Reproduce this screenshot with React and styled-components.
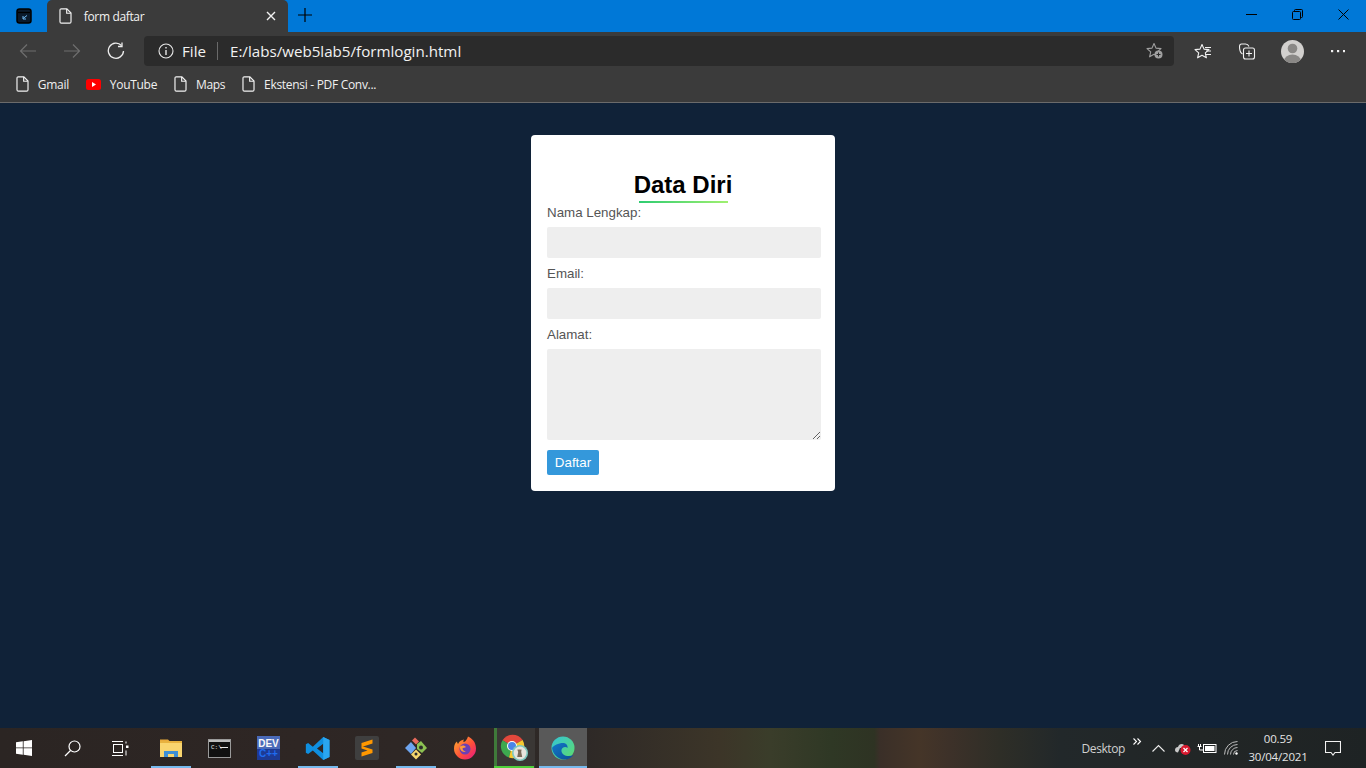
import React from 'react'
import styled, { createGlobalStyle } from 'styled-components'

const Global = createGlobalStyle`
  html, body { margin: 0; padding: 0; height: 100%; overflow: hidden; }
  body { font-family: "Liberation Sans", Arial, sans-serif; background: #102238; }
  * { box-sizing: border-box; }
`

const Screen = styled.div`
  width: 1366px;
  height: 768px;
  display: flex;
  flex-direction: column;
  overflow: hidden;
`

/* browser chrome */
const TitleBar = styled.div`
  height: 32px;
  background: #0078d7;
  display: flex;
  align-items: flex-end;
`

const TabActions = styled.div`
  width: 47px;
  height: 32px;
  display: flex;
  align-items: center;
  justify-content: center;
`

const Tab = styled.div`
  width: 241px;
  height: 32px;
  background: #3b3b3b;
  border-radius: 5px 5px 0 0;
  display: flex;
  align-items: center;
  padding: 0 12px;
  gap: 12px;
  color: #f2f2f2;
  font-family: "Open Sans", sans-serif;
  font-size: 12px;
  letter-spacing: -0.35px;
`

const TabTitle = styled.span`
  flex: 1;
`

const NewTab = styled.div`
  width: 34px;
  height: 32px;
  padding-bottom: 2px;
  display: flex;
  align-items: center;
  justify-content: center;
`

const WindowButtons = styled.div`
  margin-left: auto;
  display: flex;
`

const WindowButton = styled.div`
  width: 46px;
  height: 32px;
  padding-bottom: 4px;
  display: flex;
  align-items: center;
  justify-content: center;
`

const Toolbar = styled.div`
  height: 38px;
  background: #3b3b3b;
  display: flex;
  align-items: center;
  padding: 0 6px;
`

const NavButton = styled.div`
  width: 44px;
  height: 32px;
  display: flex;
  align-items: center;
  justify-content: center;
`

const AddressBar = styled.div`
  width: 1030px;
  height: 30px;
  margin: 0 6px 0 6px;
  background: #2b2b2b;
  border-radius: 4px;
  display: flex;
  align-items: center;
  padding: 0 10px 0 14px;
  color: #f2f2f2;
  font-family: "Open Sans", sans-serif;
  font-size: 15.15px;
`

const SiteLabel = styled.span`
  margin-left: 8px;
  padding-right: 11px;
  border-right: 1px solid #6a6a6a;
  line-height: 18px;
`

const Url = styled.span`
  margin-left: 12px;
  flex: 1;
`

const ToolIcons = styled.div`
  display: flex;
  align-items: center;
`

const ToolIcon = styled.div`
  width: 45px;
  height: 32px;
  display: flex;
  align-items: center;
  justify-content: center;
`

const Bookmarks = styled.div`
  height: 33px;
  background: #3b3b3b;
  border-bottom: 1px solid #6b6b6b;
  display: flex;
  align-items: center;
  padding: 0 0 4px 16px;
`

const Bookmark = styled.div`
  display: flex;
  align-items: center;
  gap: 9px;
  margin-right: 17px;
  color: #f0f0f0;
  font-family: "Open Sans", sans-serif;
  font-size: 12px;
  letter-spacing: -0.3px;
`

/* page */
const Page = styled.main`
  flex: 1;
  background: #102238;
  display: flex;
  justify-content: center;
  align-items: flex-start;
  padding-top: 32px;
`

const Card = styled.form`
  width: 304px;
  height: 356px;
  background: #fff;
  border-radius: 4px;
  padding: 36px 14px 0 16px;
`

const Heading = styled.h2`
  position: relative;
  margin: 0;
  height: 33px;
  padding-right: 2px;
  line-height: 28px;
  font-size: 24px;
  font-weight: 700;
  color: #000;
  text-align: center;
  &::after {
    content: '';
    position: absolute;
    left: 92px;
    top: 30px;
    width: 89px;
    height: 2px;
    background: linear-gradient(to right, #2ecc71, #a0f070);
  }
`

const Label = styled.label`
  display: block;
  height: 16px;
  line-height: 18px;
  margin-top: ${p => p.$first ? '0' : '7px'};
  margin-bottom: 7px;
  font-size: 13.33px;
  color: #555;
`

const Field = styled.input`
  display: block;
  width: 274px;
  height: 31px;
  border: 0;
  border-radius: 2px;
  background: #eee;
  padding: 0 8px;
`

const Area = styled.textarea`
  display: block;
  width: 274px;
  height: 91px;
  border: 0;
  border-radius: 2px;
  background: #eee;
  padding: 8px;
`

const Submit = styled.button`
  display: block;
  width: 52px;
  height: 25px;
  margin-top: 10px;
  padding: 0 0 1px;
  border: 0;
  border-radius: 2px;
  background: #3498db;
  color: #fff;
  font-family: "Liberation Sans", Arial, sans-serif;
  font-size: 13.33px;
`

/* windows taskbar */
const Taskbar = styled.footer`
  height: 40px;
  display: flex;
  align-items: stretch;
  color: #ddd;
  background: linear-gradient(to right,
    #2b2523 0%, #2e2624 22%, #2e2927 43%, #3c3528 52.7%, #3a3d2a 56.4%, #2f3825 60.8%,
    #2e3323 64%, #3a2f28 64.4%, #453528 67.3%, #3d3129 69.5%, #2e2e27 73.2%, #22282a 77.6%,
    #222626 88%, #1e2324 100%);
`

const StartSlot = styled.div`
  width: 48px;
  display: flex;
  align-items: center;
  justify-content: center;
`

const TaskList = styled.div`
  margin-left: 2px;
  display: flex;
`

const TaskItem = styled.div`
  position: relative;
  width: 49px;
  display: flex;
  align-items: center;
  justify-content: center;
  background: ${p => p.$active ? 'linear-gradient(#595959, #595959) 1px 0 / 48px 100% no-repeat' : 'none'};
  &::after {
    content: '';
    display: ${p => p.$mark ? 'block' : 'none'};
    position: absolute;
    left: ${p => p.$active ? '1px' : '5px'};
    bottom: 0;
    width: ${p => p.$active ? '48px' : '40px'};
    height: 2px;
    background: ${p => p.$mark};
  }
`

const ChromeGlow = styled.div`
  position: absolute;
  left: 5px;
  top: 0;
  bottom: 0;
  width: 41px;
  border-left: 3px solid #3f7a3a;
  background: #3a3735;
`

const TaskIcon = styled.div`
  position: relative;
  line-height: 0;
`

const Tray = styled.div`
  margin-left: auto;
  display: flex;
  align-items: center;
`

const DesktopLabel = styled.span`
  font-family: "Open Sans", sans-serif;
  font-size: 12px;
  letter-spacing: -0.4px;
  color: #d0d0d0;
  margin-right: 8px;
`

const More = styled.div`
  width: 13px;
  height: 40px;
  padding-top: 3px;
  color: #fff;
`

const TrayIcon = styled.div`
  width: 24.5px;
  height: 40px;
  display: flex;
  align-items: center;
  justify-content: center;
`

const Clock = styled.div`
  width: 68px;
  font-family: "Open Sans", sans-serif;
  font-size: 11.5px;
  line-height: 18px;
  text-align: center;
  color: #e4e4e4;
  letter-spacing: -0.2px;
`

const Notify = styled.div`
  width: 54px;
  padding-right: 12px;
  display: flex;
  align-items: center;
  justify-content: center;
  height: 40px;
`

function DocIcon({ size = 16 }) {
  return (
    <svg width={size * 0.8} height={size} viewBox="0 0 13 16" fill="none" stroke="#f2f2f2" strokeWidth="1.2">
      <path d="M1 2.2C1 1.3 1.5.7 2.4.7H8l4.2 4.3v8.8c0 .9-.6 1.5-1.4 1.5H2.4c-.9 0-1.4-.6-1.4-1.5z" />
      <path d="M7.8.9v4.3h4.2" />
    </svg>
  )
}

function Star({ stroke = '#f2f2f2' }) {
  return <path d="M8 1.5l2 4.6 5 .5-3.7 3.3 1.1 4.9L8 12.2l-4.4 2.6 1.1-4.9L1 6.6l5-.5z" fill="none" stroke={stroke} strokeWidth="1.1" strokeLinejoin="round" />
}

function FileExplorerIcon() {
  return (
    <svg width="22" height="20" viewBox="0 0 22 20">
      <path d="M0 1.5h8l2 2h-10z" fill="#e8a93a" />
      <rect x="0" y="3" width="22" height="16" fill="#f9d56f" />
      <rect x="0" y="3" width="22" height="2" fill="#e8b23f" />
      <path d="M4 19v-6h14v6h-4v-3h-6v3z" fill="#3f8fd6" />
    </svg>
  )
}

function CmdIcon() {
  return (
    <svg width="23" height="19" viewBox="0 0 23 19">
      <rect x=".5" y=".5" width="22" height="18" fill="#111" stroke="#9a9a9a" />
      <rect x="1" y="1" width="21" height="2" fill="#bdbdbd" />
      <text x="3" y="9.5" fontSize="6" fill="#e8e8e8" fontFamily="Liberation Mono, monospace">C:\</text>
      <rect x="12" y="8" width="8" height="1" fill="#e8e8e8" />
    </svg>
  )
}

function DevCppIcon() {
  return (
    <svg width="23" height="24" viewBox="0 0 23 24">
      <rect width="23" height="24" fill="#1d3a94" />
      <rect width="23" height="13" fill="#4a6ab8" />
      <text x="11.5" y="10.5" fontSize="10" fontWeight="700" textAnchor="middle" fill="#f8f8f8" fontFamily="Liberation Sans, sans-serif">DEV</text>
      <text x="11.5" y="21" fontSize="10" fontWeight="700" textAnchor="middle" fill="#1f6cf0" fontFamily="Liberation Sans, sans-serif">C++</text>
    </svg>
  )
}

function VsCodeIcon() {
  return (
    <svg width="25" height="25" viewBox="0 0 24 24">
      <path d="M17.5 1L23.5 3.8V20.2L17.5 23 7.5 13.8 3 17.2.8 16V8L3 6.8l4.5 3.4zM17.5 7.5L11.5 12l6 4.5z" fill="#0f8fe0" />
      <path d="M17.5 1L23.5 3.8V20.2L17.5 23z" fill="#2aa6f0" />
    </svg>
  )
}

function SublimeIcon() {
  return (
    <svg width="24" height="24" viewBox="0 0 24 24">
      <rect width="24" height="24" rx="2" fill="#3f3f3f" />
      <path d="M17.5 4.5v4L6.5 12V8zM6.5 11l11 3.5v-.1V18l-11 3.500v-4l6-2-6-2z" fill="#ff9800" transform="translate(0 -1)" />
    </svg>
  )
}

function GitExtIcon() {
  return (
    <svg width="24" height="24" viewBox="0 0 24 24">
      <path d="M1 12l6-6 5 6-5 6z" fill="#6ea5ef" />
      <path d="M8 4.500l3-3 4 4-3 3z" fill="#e86a5c" />
      <path d="M13 8l4-3 6 7-5 5-5-4z" fill="#8cc152" />
      <circle cx="17" cy="11.500" r="2" fill="#2c2c2c" />
      <path d="M7 18.500l5-5 5 5-5 5z" fill="#f5d76e" />
      <circle cx="12" cy="18" r="1.500" fill="#2c2c2c" />
    </svg>
  )
}

function FirefoxIcon() {
  return (
    <svg width="24" height="24" viewBox="0 0 24 24">
      <defs>
        <linearGradient id="ffx" x1="0" y1="0" x2="1" y2="1">
          <stop offset="0" stopColor="#ffb52e" />
          <stop offset=".55" stopColor="#ff4f3a" />
          <stop offset="1" stopColor="#e31587" />
        </linearGradient>
      </defs>
      <path d="M12 23.500A11 11 0 0 1 1 12.500C1 9 2.500 6.500 4 5.500c0 1 .4 1.800 1 2.400C6.300 5.200 9 3.800 11 3.500c-.6 1-.8 1.800-.5 2.600 2.500-.4 3.500-3 4.500-5.600 4 2 8 5.500 8 12a11 11 0 0 1-11 11z" fill="url(#ffx)" />
      <circle cx="12" cy="13" r="5.500" fill="#6b3fb5" />
      <path d="M7 10.500c2-1.800 5-1.200 6 .5-1 .7-3 .8-3.500 1.500 0 1.500 1.500 3 3.500 3-2.500 1.400-6.500-.5-6-5z" fill="#ff9a3a" />
    </svg>
  )
}

function ChromeIcon() {
  return (
    <svg width="30" height="30" viewBox="0 0 30 30">
      <g transform="translate(1 1)">
        <path d="M12 12L2.500 6.200A12 12 0 0 1 22.600 6z" fill="#e2483c" />
        <path d="M12 12L2.500 6.200A12 12 0 0 0 9 23.600z" fill="#3da84f" />
        <path d="M12 12L22.600 6A12 12 0 0 1 9 23.600z" fill="#f7c930" />
        <circle cx="12" cy="12" r="5" fill="#fff" />
        <circle cx="12" cy="12" r="4" fill="#4b85e8" />
      </g>
      <circle cx="21" cy="20" r="8" fill="#7fc9c0" />
      <circle cx="21" cy="20" r="6.400" fill="#e8e4dc" />
      <path d="M18.500 17c0-1 .8-1 1-.3.5-.2 1.500-.2 2 0 .2-.7 1-.7 1 .3l-.3 2 1 5h-5l1-5z" fill="#7a6a58" />
    </svg>
  )
}

function EdgeIcon() {
  return (
    <svg width="24" height="24" viewBox="0 0 24 24">
      <defs>
        <linearGradient id="edgeA" x1="0" y1="0" x2="1" y2="1">
          <stop offset="0" stopColor="#33c4d8" />
          <stop offset="1" stopColor="#5fdc6a" />
        </linearGradient>
        <linearGradient id="edgeB" x1="0" y1="0" x2="1" y2="1">
          <stop offset="0" stopColor="#1277c8" />
          <stop offset="1" stopColor="#0c4f94" />
        </linearGradient>
      </defs>
      <circle cx="12" cy="12" r="11.500" fill="url(#edgeA)" />
      <path d="M1 11.500C1.500 17.500 6.500 23.500 13.500 23.500c4 0 7-1.800 9-4.500-3 1.500-7.500 1.500-10-.5-2.500-2-2.500-5-1-6.500 1.500-1.500 4-1.500 5 0 .5-2.800-1.500-5-4.500-5-4.500 0-9.500 2.500-10.500 4.500z" fill="url(#edgeB)" />
    </svg>
  )
}

const tasks = [
  { icon: <FileExplorerIcon />, mark: '#76b9ed' },
  { icon: <CmdIcon /> },
  { icon: <DevCppIcon /> },
  { icon: <VsCodeIcon />, mark: '#76b9ed' },
  { icon: <SublimeIcon /> },
  { icon: <GitExtIcon />, mark: '#76b9ed' },
  { icon: <FirefoxIcon /> },
  { icon: <ChromeIcon />, mark: '#4fd03a', glow: true },
  { icon: <EdgeIcon />, mark: '#76b9ed', active: true },
]

const bookmarks = ['Gmail', 'YouTube', 'Maps', 'Ekstensi - PDF Conv...']

export default function App() {
  return (
    <Screen>
      <Global />
      <TitleBar>
        <TabActions>
          <svg width="16" height="16" viewBox="0 0 16 16">
            <rect x="1" y="1" width="14" height="14" rx="2.500" fill="#0a1a2c" stroke="#000" strokeWidth="1.500" />
            <path d="M2 4.500h12" stroke="#000" strokeWidth="1.300" />
            <path d="M11 7.500L7 10.500M7 8v3h3" stroke="#6fb8f0" strokeWidth="1" fill="none" />
          </svg>
        </TabActions>
        <Tab>
          <DocIcon />
          <TabTitle>form daftar</TabTitle>
          <svg width="10" height="10" viewBox="0 0 10 10" stroke="#f2f2f2" strokeWidth="1.400">
            <path d="M1 1l8 8M9 1l-8 8" />
          </svg>
        </Tab>
        <NewTab>
          <svg width="16" height="16" viewBox="0 0 16 16" stroke="#000" strokeWidth="1.200">
            <path d="M8 1v14M1 8h14" />
          </svg>
        </NewTab>
        <WindowButtons>
          <WindowButton>
            <svg width="11" height="11" viewBox="0 0 11 11" stroke="#000"><path d="M0 5.500h11" /></svg>
          </WindowButton>
          <WindowButton>
            <svg width="11" height="11" viewBox="0 0 11 11" fill="none" stroke="#000">
              <rect x=".5" y="2.500" width="8" height="8" rx="1" />
              <path d="M2.500 2.500V1.500a1 1 0 0 1 1-1h6a1 1 0 0 1 1 1v6a1 1 0 0 1-1 1h-1" />
            </svg>
          </WindowButton>
          <WindowButton>
            <svg width="11" height="11" viewBox="0 0 11 11" stroke="#000"><path d="M.5.5l10 10M10.500.5l-10 10" /></svg>
          </WindowButton>
        </WindowButtons>
      </TitleBar>

      <Toolbar>
        <NavButton>
          <svg width="18" height="16" viewBox="0 0 18 16" fill="none" stroke="#6e6e6e" strokeWidth="1.200">
            <path d="M17 8H1.500M8 1.500L1.500 8 8 14.500" />
          </svg>
        </NavButton>
        <NavButton>
          <svg width="18" height="16" viewBox="0 0 18 16" fill="none" stroke="#6e6e6e" strokeWidth="1.200">
            <path d="M1 8h15.500M10 1.500L16.500 8 10 14.500" />
          </svg>
        </NavButton>
        <NavButton>
          <svg width="18" height="18" viewBox="0 0 18 18" fill="none" stroke="#ededed" strokeWidth="1.300">
            <path d="M14.500 3.500A7.600 7.600 0 1 0 16.500 9" />
            <path d="M15 .5v4h-4" />
          </svg>
        </NavButton>
        <AddressBar>
          <svg width="16" height="16" viewBox="0 0 16 16" fill="none" stroke="#e8e8e8" strokeWidth="1.100">
            <circle cx="8" cy="8" r="7" />
            <path d="M8 7v5M8 4v1.500" strokeWidth="1.400" />
          </svg>
          <SiteLabel>File</SiteLabel>
          <Url>E:/labs/web5lab5/formlogin.html</Url>
          <svg width="18" height="18" viewBox="0 0 18 18">
            <Star stroke="#a0a0a0" />
            <circle cx="12.500" cy="12.500" r="4" fill="#a0a0a0" />
            <path d="M12.500 10.500v4M10.500 12.500h4" stroke="#2b2b2b" strokeWidth="1" />
          </svg>
        </AddressBar>
        <ToolIcons>
          <ToolIcon>
            <svg width="18" height="16" viewBox="0 0 18 16">
              <Star />
              <path d="M11 4.500h6M12 8h5M11.500 11.500h5.500" stroke="#f2f2f2" strokeWidth="1.100" />
            </svg>
          </ToolIcon>
          <ToolIcon>
            <svg width="18" height="18" viewBox="1 0 18 18" fill="none" stroke="#f2f2f2" strokeWidth="1.100">
              <path d="M4.500 12C2.500 11 1.500 9 1.500 4.500c0-1.500.8-2.500 2-2.500h4c1.500 0 2.800.8 3.500 2.500" />
              <rect x="5.500" y="6" width="11" height="11" rx="2" />
              <path d="M11 8.500v6M8 11.500h6" />
            </svg>
          </ToolIcon>
          <ToolIcon>
            <svg width="23" height="23" viewBox="0 0 23 23">
              <defs>
                <clipPath id="avatar"><circle cx="11.500" cy="11.500" r="11.500" /></clipPath>
              </defs>
              <g clipPath="url(#avatar)">
                <rect width="23" height="23" fill="#d2d0ce" />
                <circle cx="11.500" cy="8.500" r="4.800" fill="#8a8886" />
                <ellipse cx="11.500" cy="21" rx="8.500" ry="6.500" fill="#8a8886" />
              </g>
            </svg>
          </ToolIcon>
          <ToolIcon>
            <svg width="14" height="4" viewBox="0 0 14 4" fill="#f2f2f2">
              <rect y="1" width="2.200" height="2.200" />
              <rect x="6" y="1" width="2.200" height="2.200" />
              <rect x="12" y="1" width="2.200" height="2.200" />
            </svg>
          </ToolIcon>
        </ToolIcons>
      </Toolbar>

      <Bookmarks>
        {bookmarks.map(name => (
          <Bookmark key={name}>
            {name === 'YouTube' ? (
              <svg width="15" height="11" viewBox="0 0 15 11">
                <rect width="15" height="11" rx="2.500" fill="#f00" />
                <path d="M6 3l4 2.500L6 8z" fill="#fff" />
              </svg>
            ) : <DocIcon />}
            {name}
          </Bookmark>
        ))}
      </Bookmarks>

      <Page>
        <Card>
          <Heading>Data Diri</Heading>
          <Label $first>Nama Lengkap:</Label>
          <Field type="text" />
          <Label>Email:</Label>
          <Field type="text" />
          <Label>Alamat:</Label>
          <Area />
          <Submit type="button">Daftar</Submit>
        </Card>
      </Page>

      <Taskbar>
        <StartSlot>
          <svg width="16" height="16" viewBox="0 0 16 16" fill="#fff">
            <path d="M0 2.300L6.800 1.300V7.500H0zM7.600 1.200L16 0V7.500H7.600zM0 8.300H6.800V14.700L0 13.700zM7.600 8.300H16V16L7.600 14.800z" />
          </svg>
        </StartSlot>
        <StartSlot>
          <svg width="17" height="17" viewBox="0 0 17 17" fill="none" stroke="#fff" strokeWidth="1.200">
            <circle cx="10.500" cy="6.500" r="5.500" />
            <path d="M6.500 10.500L1 16" />
          </svg>
        </StartSlot>
        <StartSlot>
          <svg width="17" height="15" viewBox="0 0 17 15" fill="none" stroke="#fff" strokeWidth="1">
            <rect x="1.500" y="3.500" width="9" height="8" />
            <path d="M0 .5h11M0 14.500h11M14 .5v2" />
            <rect x="14" y="4.500" width="2.500" height="2.500" fill="#fff" stroke="none" />
            <path d="M14 9.500v5" />
          </svg>
        </StartSlot>
        <TaskList>
          {tasks.map((task, i) => (
            <TaskItem key={i} $mark={task.mark} $active={task.active}>
              {task.glow && <ChromeGlow />}
              <TaskIcon>{task.icon}</TaskIcon>
            </TaskItem>
          ))}
        </TaskList>
        <Tray>
          <DesktopLabel>Desktop</DesktopLabel>
          <More>
            <svg width="9" height="7" viewBox="0 0 9 7" fill="none" stroke="#fff" strokeWidth="1.100">
              <path d="M.5.5L3.500 3.500.5 6.500M4.500.5L7.500 3.500 4.500 6.500" />
            </svg>
          </More>
          <TrayIcon>
            <svg width="13" height="8" viewBox="0 0 13 8" fill="none" stroke="#eee" strokeWidth="1.100"><path d="M.5 7.500L6.500 1.500 12.500 7.500" /></svg>
          </TrayIcon>
          <TrayIcon>
            <svg width="17" height="14" viewBox="0 0 17 14">
              <path d="M1 9c0-2 1.500-3 3-3 .5-2 2-3 3.500-3C10 3 11 5 11 7H6L4 11.500C2 11.500 1 10.500 1 9z" fill="#c8c8c8" />
              <circle cx="11.500" cy="9" r="5" fill="#d8182e" />
              <path d="M9.500 7l4 4M13.500 7l-4 4" stroke="#fff" strokeWidth="1.200" />
            </svg>
          </TrayIcon>
          <TrayIcon>
            <svg width="20" height="12" viewBox="0 0 20 12" fill="none" stroke="#fff" strokeWidth="1">
              <rect x="6.500" y="2.500" width="12.500" height="8" />
              <rect x="8" y="4" width="9.500" height="5" fill="#fff" stroke="none" />
              <path d="M1.500 2v3M3.500 2v3M.5 4.500h4M2.500 5v3h4" />
            </svg>
          </TrayIcon>
          <TrayIcon>
            <svg width="15" height="14" viewBox="0 0 15 14" fill="none" stroke="#bdbdbd" strokeWidth="1">
              <path d="M.5 13.500A13 13 0 0 1 13.500.5M3.500 13.500A10 10 0 0 1 13.500 3.500M6.500 13.500A7 7 0 0 1 13.500 6.500M9.500 13.500A4 4 0 0 1 13.500 9.500" />
              <circle cx="12.500" cy="12.500" r="1.200" fill="#fff" stroke="none" />
            </svg>
          </TrayIcon>
          <Clock>
            <div>00.59</div>
            <div>30/04/2021</div>
          </Clock>
          <Notify>
            <svg width="16" height="15" viewBox="0 0 16 15" fill="none" stroke="#f2f2f2" strokeWidth="1.100">
              <path d="M.5.5h15v11H10l-2 2.500-2-2.500H.5z" />
            </svg>
          </Notify>
        </Tray>
      </Taskbar>
    </Screen>
  )
}
